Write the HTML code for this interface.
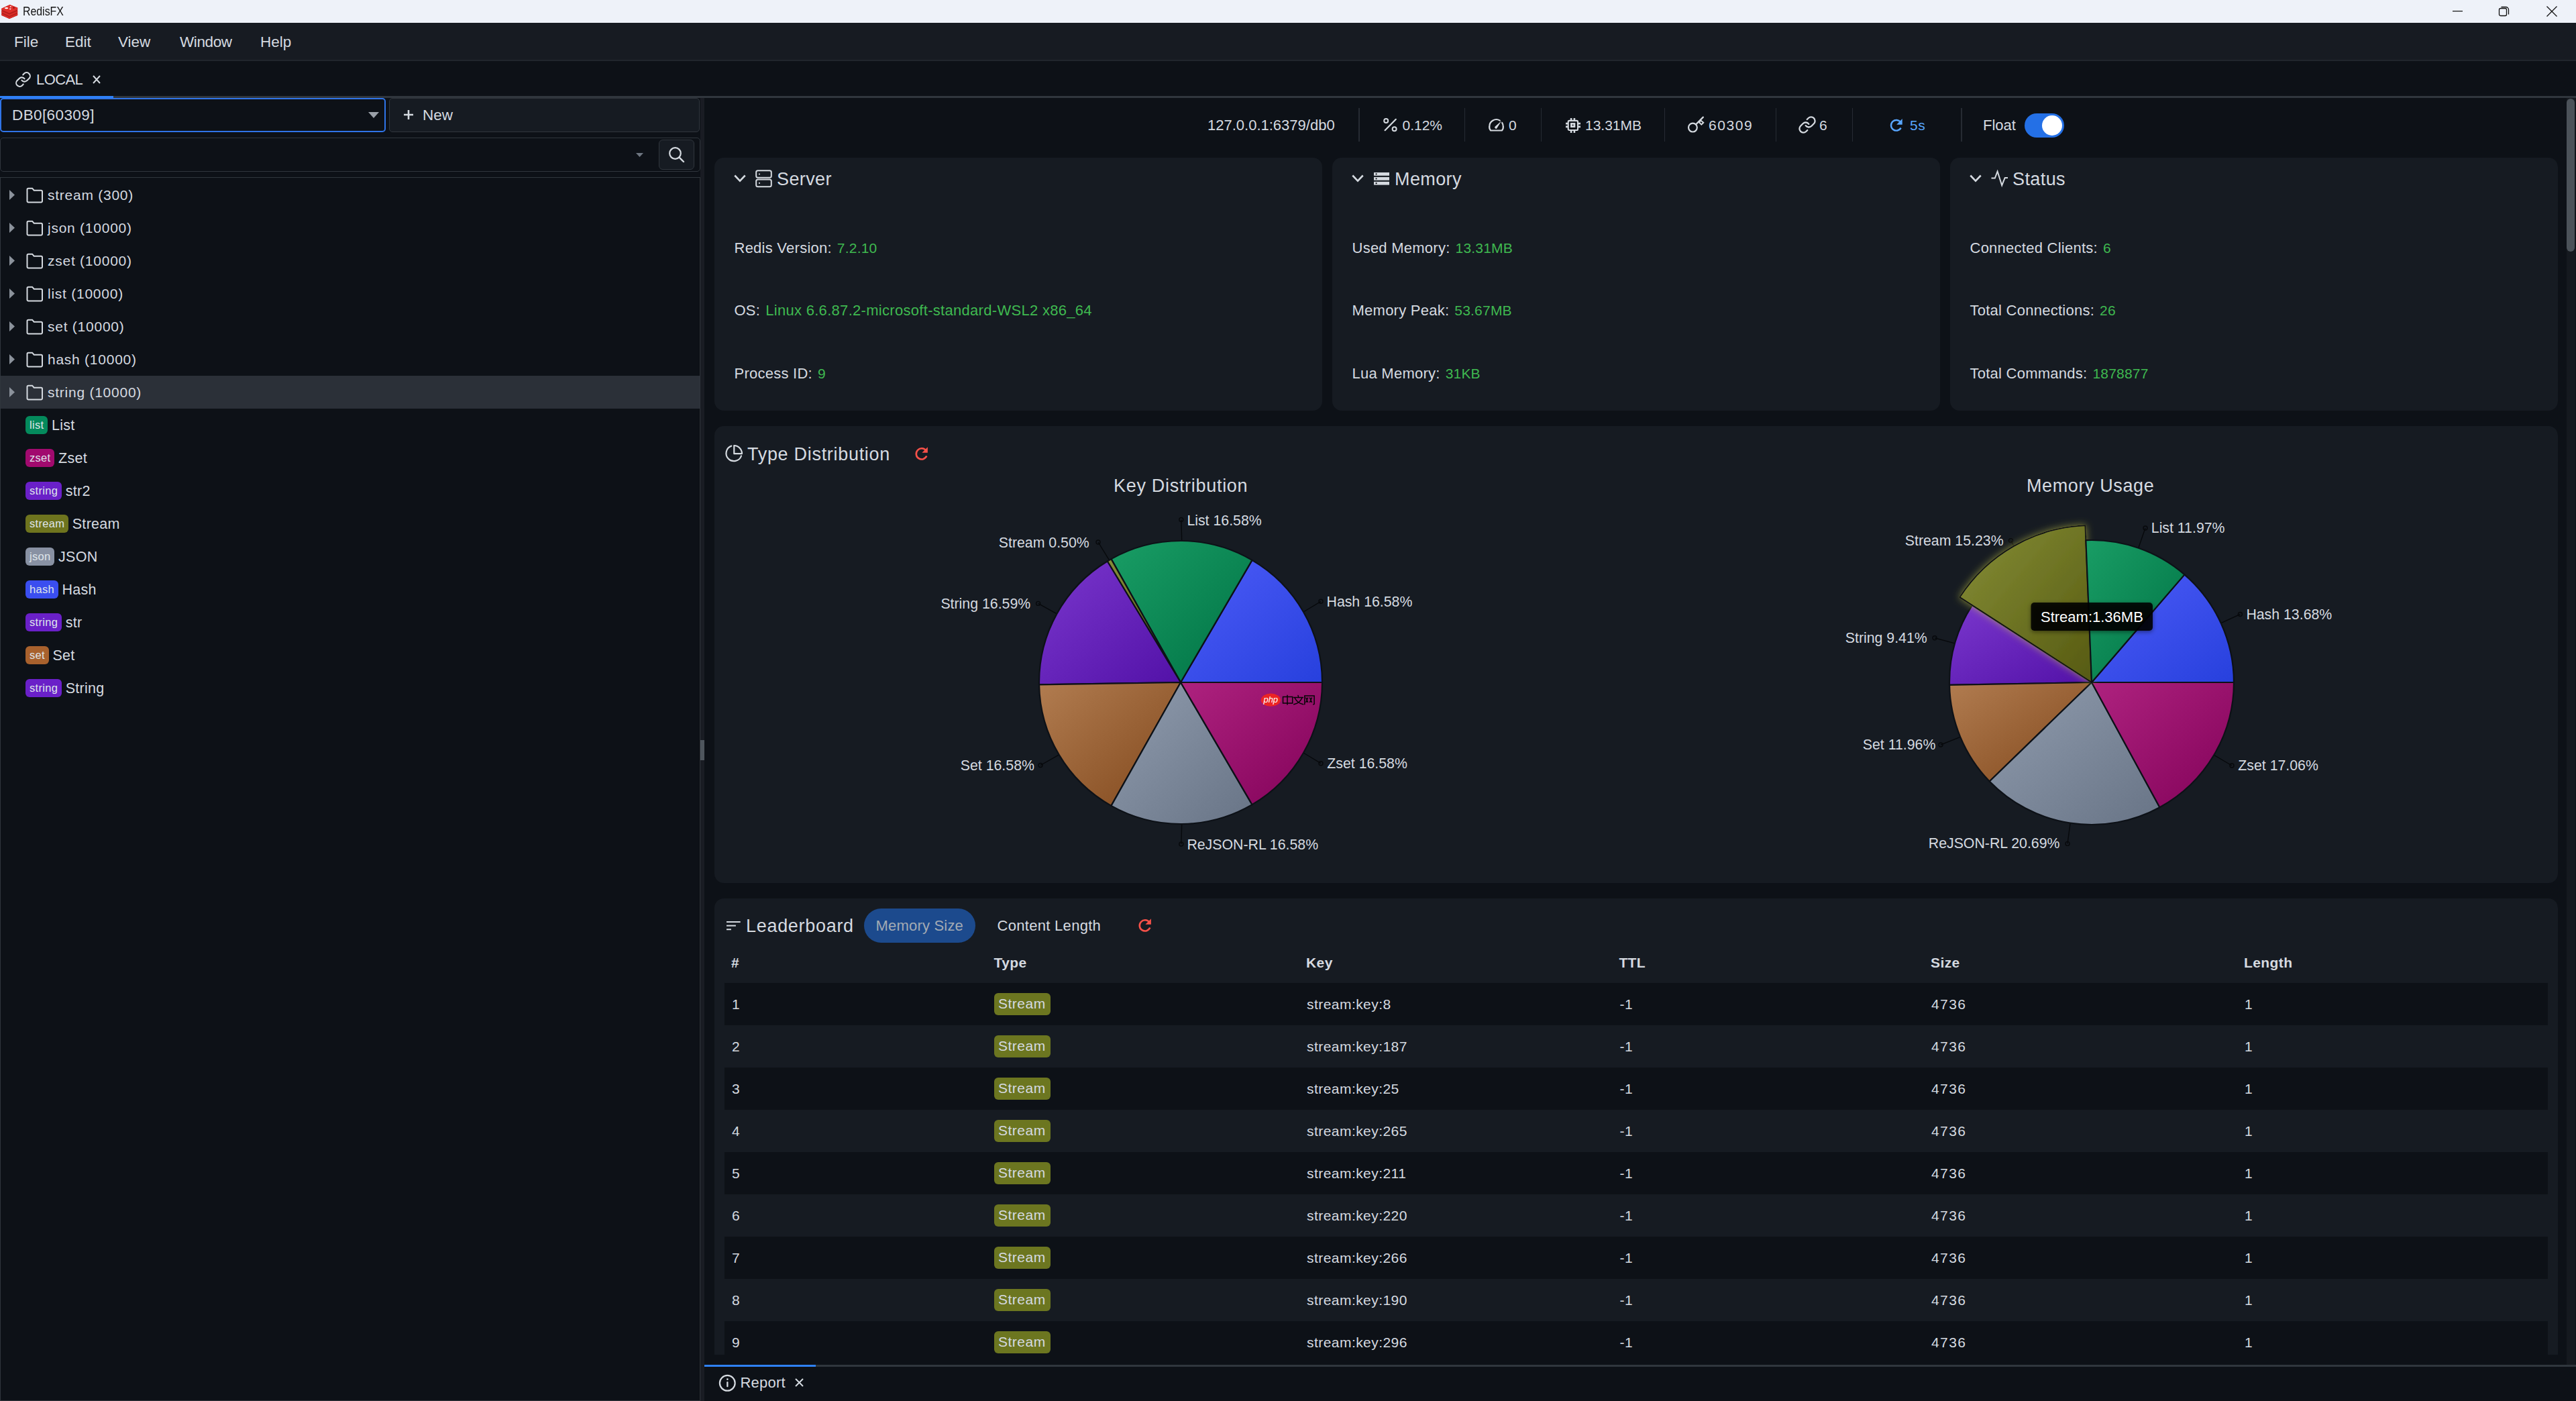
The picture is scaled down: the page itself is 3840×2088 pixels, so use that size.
<!DOCTYPE html>
<html><head><meta charset="utf-8">
<style>
*{box-sizing:border-box;margin:0;padding:0}
html,body{width:3840px;height:2088px;overflow:hidden;background:#0d1117;font-family:"Liberation Sans",sans-serif;color:#d5dae0}
.a{position:absolute}
.t{position:absolute;white-space:nowrap;line-height:30px;height:30px}
.g{color:#3fb950}
svg{position:absolute;overflow:visible}
</style></head><body>
<!-- title bar -->
<div class="a" style="left:0;top:0;width:3840px;height:34px;background:#eef2f9"></div>
<svg style="left:2px;top:7px" width="25" height="21" viewBox="0 0 25 21">
 <path d="M0.3 5.8 L12.6 0.1 L24.2 4.4 L24.2 15.9 L12 20.9 L0.3 15.9Z" fill="#b51f1b"/>
 <path d="M0.3 5.8 L12.6 0.1 L24.2 4.4 L24.2 7.2 L12 12.6 L0.3 7.4Z" fill="#e0302a"/>
 <path d="M0.3 9.2 L12 14.6 L24.2 9.2 L24.2 11.6 L12 17 L0.3 11.6Z" fill="#d82d27"/>
 <path d="M0.3 13.2 L12 18.6 L24.2 13.2 L24.2 15.6 L12 20.9 L0.3 15.6Z" fill="#d82d27"/>
 <ellipse cx="7.6" cy="5.1" rx="2.6" ry="1.2" fill="#fff"/>
 <path d="M12.6 2 L15.4 2.8 L13.3 4.1Z" fill="#fff"/>
 <path d="M11.5 5.9 L14.8 5.4 L13.5 7.6Z" fill="#fff"/>
 <circle cx="18.6" cy="4.7" r="1.1" fill="#7a1010"/>
</svg>
<div class="t" style="left:34px;top:2.4px;font-size:19px;color:#111;transform:scaleX(0.835);transform-origin:0 0">RedisFX</div>
<svg style="left:3656px;top:16px" width="15" height="1"><rect x="0" y="0" width="15" height="1.2" fill="#111"/></svg>
<svg style="left:3724px;top:8px" width="18" height="18" viewBox="0 0 18 18"><rect x="1.5" y="4.5" width="11" height="11" rx="2" fill="none" stroke="#111" stroke-width="1.3"/><path d="M4.5 2.5 h7 a4 4 0 0 1 4 4 v7" fill="none" stroke="#111" stroke-width="1.3"/></svg>
<svg style="left:3796px;top:8.5px" width="16" height="16" viewBox="0 0 16 16"><path d="M0.5 0.5 L15.5 15.5 M15.5 0.5 L0.5 15.5" stroke="#111" stroke-width="1.3"/></svg>

<!-- menu bar -->
<div class="a" style="left:0;top:34px;width:3840px;height:57px;background:#171b22;border-bottom:2px solid #21262d"></div>
<div class="t" style="left:21px;top:48.4px;font-size:22.5px">File</div>
<div class="t" style="left:97px;top:48.4px;font-size:22.5px">Edit</div>
<div class="t" style="left:176px;top:48.4px;font-size:22.5px">View</div>
<div class="t" style="left:268px;top:48.4px;font-size:22.5px;letter-spacing:-0.4px">Window</div>
<div class="t" style="left:388px;top:48.4px;font-size:22.5px">Help</div>

<!-- tab bar -->
<div class="a" style="left:0;top:91px;width:3840px;height:52px;background:#0d1117"></div>
<div class="a" style="left:0;top:143px;width:3840px;height:3px;background:#30363d"></div>
<div class="a" style="left:0;top:143px;width:169px;height:3px;background:#2f81f7"></div>
<svg style="left:22px;top:106px" width="25" height="25" viewBox="0 0 24 24" fill="none" stroke="#d5dae0" stroke-width="2" stroke-linecap="round"><path d="M10 13a5 5 0 0 0 7.54.54l3-3a5 5 0 0 0-7.07-7.07l-1.72 1.71"/><path d="M14 11a5 5 0 0 0-7.54-.54l-3 3a5 5 0 0 0 7.07 7.07l1.71-1.71"/></svg>
<div class="t" style="left:54px;top:104px;font-size:22px;letter-spacing:-0.6px">LOCAL</div>
<svg style="left:138px;top:112px" width="12" height="13" viewBox="0 0 12 13"><path d="M1 1 L11 12 M11 1 L1 12" stroke="#d5dae0" stroke-width="2"/></svg>


<!-- LEFT PANEL -->
<div class="a" style="left:0;top:146px;width:1044px;height:1942px;background:#0d1117"></div>
<div class="a" style="left:1044px;top:146px;width:6px;height:1942px;background:#191c23"></div>
<div class="a" style="left:1044px;top:1103px;width:6px;height:30px;background:#4f565e"></div>
<!-- db select -->
<div class="a" style="left:0;top:146px;width:575px;height:51px;border:2px solid #2f74e8;border-radius:5px;background:#0d1117"></div>
<div class="t" style="left:18px;top:157px;font-size:22.5px;letter-spacing:0.4px">DB0[60309]</div>
<svg style="left:549px;top:167px" width="16" height="9" viewBox="0 0 16 9"><path d="M0 0 L16 0 L8 9Z" fill="#9aa0a8"/></svg>
<!-- new btn -->
<div class="a" style="left:580px;top:146px;width:463px;height:51px;border:1px solid #30363d;border-radius:5px;background:#161b22"></div>
<svg style="left:602px;top:164px" width="14" height="14" viewBox="0 0 14 14"><path d="M7 0 V14 M0 7 H14" stroke="#d5dae0" stroke-width="2.6"/></svg>
<div class="t" style="left:630px;top:156.8px;font-size:22.5px">New</div>
<!-- search -->
<div class="a" style="left:0;top:205px;width:1044px;height:51px;border:1px solid #30363d;border-radius:5px;background:#0d1117"></div>
<svg style="left:948px;top:228px" width="11" height="6" viewBox="0 0 11 6"><path d="M0 0 L11 0 L5.5 6Z" fill="#6e7681"/></svg>
<div class="a" style="left:982px;top:208px;width:53px;height:45px;border:1px solid #30363d;border-radius:6px;background:#161b22"></div>
<svg style="left:997px;top:219px" width="24" height="23" viewBox="0 0 24 23"><circle cx="9.5" cy="9.5" r="8.3" fill="none" stroke="#d5dae0" stroke-width="2.2"/><path d="M15.6 15.6 L22 22" stroke="#d5dae0" stroke-width="2.4" stroke-linecap="round"/></svg>
<!-- tree box -->
<div class="a" style="left:0;top:264px;width:1044px;height:1824px;border:1px solid #30363d;border-radius:0;background:#0d1117"></div>
<div class="a" style="left:1042px;top:265px;width:1px;height:1822px;background:#0a0c10"></div>
<svg style="left:14px;top:283.1px" width="8" height="15" viewBox="0 0 8 15"><path d="M0 0 L8 7.5 L0 15Z" fill="#8b929b"/></svg>
<svg style="left:38px;top:278.6px" width="27" height="24" viewBox="0 0 27 24"><path d="M2.5 3.5 a1.8 1.8 0 0 1 1.8-1.8 h5.8 l2.6 3 h10.5 a1.8 1.8 0 0 1 1.8 1.8 v14.2 a1.8 1.8 0 0 1 -1.8 1.8 h-18.9 a1.8 1.8 0 0 1 -1.8-1.8z" fill="none" stroke="#d5dae0" stroke-width="2"/></svg>
<div class="t" style="left:71px;top:275.6px;font-size:21px;letter-spacing:0.75px">stream (300)</div>
<svg style="left:14px;top:332.2px" width="8" height="15" viewBox="0 0 8 15"><path d="M0 0 L8 7.5 L0 15Z" fill="#8b929b"/></svg>
<svg style="left:38px;top:327.7px" width="27" height="24" viewBox="0 0 27 24"><path d="M2.5 3.5 a1.8 1.8 0 0 1 1.8-1.8 h5.8 l2.6 3 h10.5 a1.8 1.8 0 0 1 1.8 1.8 v14.2 a1.8 1.8 0 0 1 -1.8 1.8 h-18.9 a1.8 1.8 0 0 1 -1.8-1.8z" fill="none" stroke="#d5dae0" stroke-width="2"/></svg>
<div class="t" style="left:71px;top:324.7px;font-size:21px;letter-spacing:0.75px">json (10000)</div>
<svg style="left:14px;top:381.2px" width="8" height="15" viewBox="0 0 8 15"><path d="M0 0 L8 7.5 L0 15Z" fill="#8b929b"/></svg>
<svg style="left:38px;top:376.7px" width="27" height="24" viewBox="0 0 27 24"><path d="M2.5 3.5 a1.8 1.8 0 0 1 1.8-1.8 h5.8 l2.6 3 h10.5 a1.8 1.8 0 0 1 1.8 1.8 v14.2 a1.8 1.8 0 0 1 -1.8 1.8 h-18.9 a1.8 1.8 0 0 1 -1.8-1.8z" fill="none" stroke="#d5dae0" stroke-width="2"/></svg>
<div class="t" style="left:71px;top:373.7px;font-size:21px;letter-spacing:0.75px">zset (10000)</div>
<svg style="left:14px;top:430.2px" width="8" height="15" viewBox="0 0 8 15"><path d="M0 0 L8 7.5 L0 15Z" fill="#8b929b"/></svg>
<svg style="left:38px;top:425.8px" width="27" height="24" viewBox="0 0 27 24"><path d="M2.5 3.5 a1.8 1.8 0 0 1 1.8-1.8 h5.8 l2.6 3 h10.5 a1.8 1.8 0 0 1 1.8 1.8 v14.2 a1.8 1.8 0 0 1 -1.8 1.8 h-18.9 a1.8 1.8 0 0 1 -1.8-1.8z" fill="none" stroke="#d5dae0" stroke-width="2"/></svg>
<div class="t" style="left:71px;top:422.8px;font-size:21px;letter-spacing:0.75px">list (10000)</div>
<svg style="left:14px;top:479.3px" width="8" height="15" viewBox="0 0 8 15"><path d="M0 0 L8 7.5 L0 15Z" fill="#8b929b"/></svg>
<svg style="left:38px;top:474.8px" width="27" height="24" viewBox="0 0 27 24"><path d="M2.5 3.5 a1.8 1.8 0 0 1 1.8-1.8 h5.8 l2.6 3 h10.5 a1.8 1.8 0 0 1 1.8 1.8 v14.2 a1.8 1.8 0 0 1 -1.8 1.8 h-18.9 a1.8 1.8 0 0 1 -1.8-1.8z" fill="none" stroke="#d5dae0" stroke-width="2"/></svg>
<div class="t" style="left:71px;top:471.8px;font-size:21px;letter-spacing:0.75px">set (10000)</div>
<svg style="left:14px;top:528.4px" width="8" height="15" viewBox="0 0 8 15"><path d="M0 0 L8 7.5 L0 15Z" fill="#8b929b"/></svg>
<svg style="left:38px;top:523.9px" width="27" height="24" viewBox="0 0 27 24"><path d="M2.5 3.5 a1.8 1.8 0 0 1 1.8-1.8 h5.8 l2.6 3 h10.5 a1.8 1.8 0 0 1 1.8 1.8 v14.2 a1.8 1.8 0 0 1 -1.8 1.8 h-18.9 a1.8 1.8 0 0 1 -1.8-1.8z" fill="none" stroke="#d5dae0" stroke-width="2"/></svg>
<div class="t" style="left:71px;top:520.9px;font-size:21px;letter-spacing:0.75px">hash (10000)</div>
<div class="a" style="left:1px;top:560.0px;width:1042px;height:49.05px;background:#2b3038"></div>
<svg style="left:14px;top:577.4px" width="8" height="15" viewBox="0 0 8 15"><path d="M0 0 L8 7.5 L0 15Z" fill="#8b929b"/></svg>
<svg style="left:38px;top:572.9px" width="27" height="24" viewBox="0 0 27 24"><path d="M2.5 3.5 a1.8 1.8 0 0 1 1.8-1.8 h5.8 l2.6 3 h10.5 a1.8 1.8 0 0 1 1.8 1.8 v14.2 a1.8 1.8 0 0 1 -1.8 1.8 h-18.9 a1.8 1.8 0 0 1 -1.8-1.8z" fill="none" stroke="#d5dae0" stroke-width="2"/></svg>
<div class="t" style="left:71px;top:569.9px;font-size:21px;letter-spacing:0.75px">string (10000)</div>
<div class="a" style="left:38px;top:619.6px;height:27px;padding:0 6px;border-radius:6px;background:#048a5c;font-size:16.5px;line-height:27px;color:#dfe5ea;letter-spacing:0.3px;display:flex;align-items:center"><span>list</span><span style="position:absolute;left:calc(100% + 5.5px);top:1px;font-size:21.5px;letter-spacing:0.3px;color:#d5dae0;white-space:nowrap">List</span></div>
<div class="a" style="left:38px;top:668.7px;height:27px;padding:0 6px;border-radius:6px;background:#a10a6e;font-size:16.5px;line-height:27px;color:#dfe5ea;letter-spacing:0.3px;display:flex;align-items:center"><span>zset</span><span style="position:absolute;left:calc(100% + 5.5px);top:1px;font-size:21.5px;letter-spacing:0.3px;color:#d5dae0;white-space:nowrap">Zset</span></div>
<div class="a" style="left:38px;top:717.8px;height:27px;padding:0 6px;border-radius:6px;background:#6a20c8;font-size:16.5px;line-height:27px;color:#dfe5ea;letter-spacing:0.3px;display:flex;align-items:center"><span>string</span><span style="position:absolute;left:calc(100% + 5.5px);top:1px;font-size:21.5px;letter-spacing:0.3px;color:#d5dae0;white-space:nowrap">str2</span></div>
<div class="a" style="left:38px;top:766.8px;height:27px;padding:0 6px;border-radius:6px;background:#6e741e;font-size:16.5px;line-height:27px;color:#dfe5ea;letter-spacing:0.3px;display:flex;align-items:center"><span>stream</span><span style="position:absolute;left:calc(100% + 5.5px);top:1px;font-size:21.5px;letter-spacing:0.3px;color:#d5dae0;white-space:nowrap">Stream</span></div>
<div class="a" style="left:38px;top:815.9px;height:27px;padding:0 6px;border-radius:6px;background:#8891a3;font-size:16.5px;line-height:27px;color:#dfe5ea;letter-spacing:0.3px;display:flex;align-items:center"><span>json</span><span style="position:absolute;left:calc(100% + 5.5px);top:1px;font-size:21.5px;letter-spacing:0.3px;color:#d5dae0;white-space:nowrap">JSON</span></div>
<div class="a" style="left:38px;top:864.9px;height:27px;padding:0 6px;border-radius:6px;background:#3a4ef0;font-size:16.5px;line-height:27px;color:#dfe5ea;letter-spacing:0.3px;display:flex;align-items:center"><span>hash</span><span style="position:absolute;left:calc(100% + 5.5px);top:1px;font-size:21.5px;letter-spacing:0.3px;color:#d5dae0;white-space:nowrap">Hash</span></div>
<div class="a" style="left:38px;top:914.0px;height:27px;padding:0 6px;border-radius:6px;background:#6a20c8;font-size:16.5px;line-height:27px;color:#dfe5ea;letter-spacing:0.3px;display:flex;align-items:center"><span>string</span><span style="position:absolute;left:calc(100% + 5.5px);top:1px;font-size:21.5px;letter-spacing:0.3px;color:#d5dae0;white-space:nowrap">str</span></div>
<div class="a" style="left:38px;top:963.0px;height:27px;padding:0 6px;border-radius:6px;background:#a8612d;font-size:16.5px;line-height:27px;color:#dfe5ea;letter-spacing:0.3px;display:flex;align-items:center"><span>set</span><span style="position:absolute;left:calc(100% + 5.5px);top:1px;font-size:21.5px;letter-spacing:0.3px;color:#d5dae0;white-space:nowrap">Set</span></div>
<div class="a" style="left:38px;top:1012.0px;height:27px;padding:0 6px;border-radius:6px;background:#6a20c8;font-size:16.5px;line-height:27px;color:#dfe5ea;letter-spacing:0.3px;display:flex;align-items:center"><span>string</span><span style="position:absolute;left:calc(100% + 5.5px);top:1px;font-size:21.5px;letter-spacing:0.3px;color:#d5dae0;white-space:nowrap">String</span></div>
<div id="left"></div>

<!-- RIGHT PANEL -->
<div class="a" style="left:1050px;top:146px;width:2790px;height:1888px;background:#0d1117"></div>
<div class="a" style="left:3826px;top:146px;width:13px;height:1888px;background:#15191f"></div>
<div class="a" style="left:3826px;top:147px;width:12px;height:228px;border-radius:6px;background:#4b5259"></div>
<!-- stats bar -->
<div class="t" style="left:1800px;top:171.5px;font-size:22px;letter-spacing:0px;">127.0.0.1:6379/db0</div>
<div class="a" style="left:2025.0px;top:161px;width:1.5px;height:50px;background:#262b33"></div>
<div class="a" style="left:2182.8px;top:161px;width:1.5px;height:50px;background:#262b33"></div>
<div class="a" style="left:2296.5px;top:161px;width:1.5px;height:50px;background:#262b33"></div>
<div class="a" style="left:2480.5px;top:161px;width:1.5px;height:50px;background:#262b33"></div>
<div class="a" style="left:2646.5px;top:161px;width:1.5px;height:50px;background:#262b33"></div>
<div class="a" style="left:2760.8px;top:161px;width:1.5px;height:50px;background:#262b33"></div>
<div class="a" style="left:2923.2px;top:161px;width:1.5px;height:50px;background:#262b33"></div>
<svg style="left:2062px;top:176px" width="21" height="20" viewBox="0 0 21 20"><circle cx="4.2" cy="3.9" r="3" fill="none" stroke="#d5dae0" stroke-width="2"/><circle cx="16.6" cy="16.3" r="3" fill="none" stroke="#d5dae0" stroke-width="2"/><path d="M2.6 18.2 L18.8 1.8" stroke="#d5dae0" stroke-width="2.2" stroke-linecap="round"/></svg>
<div class="t" style="left:2090.5px;top:171.5px;font-size:21px;letter-spacing:0px;">0.12%</div>
<svg style="left:2219px;top:177px" width="23" height="19" viewBox="0 0 23 19"><path d="M16.8 2.6 A10.2 10.2 0 0 0 1.3 11.3 a7 7 0 0 0 1.8 6.2 h16.8 a7 7 0 0 0 1.8-6.2 a10 10 0 0 0 -1.5-5.3" fill="none" stroke="#d5dae0" stroke-width="2.2" stroke-linecap="round"/><path d="M19.2 3.2 L12.8 13.6 A1.9 1.9 0 1 1 9.8 11.4Z" fill="#d5dae0"/></svg>
<div class="t" style="left:2249px;top:171.5px;font-size:21px;letter-spacing:0px;">0</div>
<svg style="left:2334px;top:176px" width="22" height="22" viewBox="0 0 22 22"><rect x="3.7" y="3.9" width="14.3" height="14.1" rx="1.5" fill="none" stroke="#d5dae0" stroke-width="2.1"/><rect x="7" y="7.1" width="7.3" height="6.9" fill="#d5dae0"/><circle cx="10.6" cy="10.5" r="1" fill="#0d1117"/><path d="M8.1 0 v3 M12.9 0 v3 M8.1 19 v3 M12.9 19 v3 M0 8.1 h3 M0 12.9 h3 M19 8.1 h3 M19 12.9 h3" stroke="#d5dae0" stroke-width="2.6"/></svg>
<div class="t" style="left:2363px;top:171.5px;font-size:21px;letter-spacing:0px;">13.31MB</div>
<svg style="left:2515px;top:173px" width="28" height="26" viewBox="0 0 28 26"><circle cx="8.4" cy="17.1" r="6.4" fill="none" stroke="#d5dae0" stroke-width="2.2"/><path d="M13 12.5 L23.8 1.6" stroke="#d5dae0" stroke-width="2.3" stroke-linecap="round"/><path d="M17.8 9.2 L20.4 6.6 L24.2 9.8 L21.3 12.6Z" fill="none" stroke="#d5dae0" stroke-width="2"/></svg>
<div class="t" style="left:2547px;top:171.5px;font-size:21px;letter-spacing:1.6px;">60309</div>
<svg style="left:2680px;top:172px" width="28" height="28" viewBox="0 0 24 24" fill="none" stroke="#d5dae0" stroke-width="1.95" stroke-linecap="round"><path d="M10 13a5 5 0 0 0 7.54.54l3-3a5 5 0 0 0-7.07-7.07l-1.72 1.71"/><path d="M14 11a5 5 0 0 0-7.54-.54l-3 3a5 5 0 0 0 7.07 7.07l1.71-1.71"/></svg>
<div class="t" style="left:2712px;top:171.5px;font-size:21px;letter-spacing:0px;">6</div>
<svg style="left:2816px;top:176px" width="22" height="21" viewBox="0 0 22 21"><path d="M17.2 6.4 A7.8 7.8 0 1 0 17.6 14.6" fill="none" stroke="#58a6ff" stroke-width="2.4"/><path d="M19.7 0.9 V9.8 H11.2Z" fill="#58a6ff"/></svg>
<div class="t" style="left:2847px;top:171.5px;font-size:21px;color:#58a6ff;letter-spacing:0.6px;">5s</div>
<div class="t" style="left:2956px;top:171.5px;font-size:22px;letter-spacing:0px;">Float</div>
<div class="a" style="left:3018px;top:169px;width:59px;height:36px;border-radius:18px;background:#2470e6"></div><div class="a" style="left:3044px;top:172px;width:30px;height:30px;border-radius:15px;background:#fff"></div>
<div class="a" style="left:1065px;top:235px;width:906px;height:377px;border-radius:14px;background:#161b22"></div>
<svg style="left:1093.7px;top:260px" width="18" height="12" viewBox="0 0 18 12"><path d="M1.3 1.5 L9 9.6 L16.7 1.5" fill="none" stroke="#d5dae0" stroke-width="2.6"/></svg>
<svg style="left:1126px;top:253px" width="25" height="26" viewBox="0 0 25 26"><rect x="1.2" y="1.2" width="22.6" height="10.6" rx="2.5" fill="none" stroke="#d5dae0" stroke-width="2"/><rect x="1.2" y="14.6" width="22.6" height="10.6" rx="2.5" fill="none" stroke="#d5dae0" stroke-width="2"/><circle cx="6" cy="6.5" r="1.1" fill="#d5dae0"/><circle cx="6" cy="19.9" r="1.1" fill="#d5dae0"/></svg>
<div class="t" style="left:1158px;top:252.4px;font-size:27px;letter-spacing:0.4px;">Server</div>
<div class="t" style="left:1094.5px;top:355.3px;font-size:22px;letter-spacing:0.25px">Redis Version:<span class="g" style="margin-left:8px;font-size:21px;letter-spacing:0.2px">7.2.10</span></div>
<div class="t" style="left:1094.5px;top:448.4px;font-size:22px;letter-spacing:0.25px">OS:<span class="g" style="margin-left:8px;font-size:22px;letter-spacing:0.3px">Linux 6.6.87.2-microsoft-standard-WSL2 x86_64</span></div>
<div class="t" style="left:1094.5px;top:541.5px;font-size:22px;letter-spacing:0.25px">Process ID:<span class="g" style="margin-left:8px;font-size:21px;letter-spacing:0.2px">9</span></div>
<div class="a" style="left:1986px;top:235px;width:906px;height:377px;border-radius:14px;background:#161b22"></div>
<svg style="left:2014.7px;top:260px" width="18" height="12" viewBox="0 0 18 12"><path d="M1.3 1.5 L9 9.6 L16.7 1.5" fill="none" stroke="#d5dae0" stroke-width="2.6"/></svg>
<svg style="left:2048px;top:257px" width="23" height="19" viewBox="0 0 23 19"><rect x="0" y="0" width="23" height="4.8" fill="#d5dae0"/><rect x="0" y="6.9" width="23" height="4.8" fill="#d5dae0"/><rect x="0" y="13.8" width="23" height="4.8" fill="#d5dae0"/><circle cx="3.6" cy="2.4" r="1.1" fill="#0d1117"/><circle cx="3.6" cy="9.3" r="1.1" fill="#0d1117"/><circle cx="3.6" cy="16.2" r="1.1" fill="#0d1117"/></svg>
<div class="t" style="left:2079px;top:252.4px;font-size:27px;letter-spacing:0.4px;">Memory</div>
<div class="t" style="left:2015.5px;top:355.3px;font-size:22px;letter-spacing:0.25px">Used Memory:<span class="g" style="margin-left:8px;font-size:21px;letter-spacing:0.2px">13.31MB</span></div>
<div class="t" style="left:2015.5px;top:448.4px;font-size:22px;letter-spacing:0.25px">Memory Peak:<span class="g" style="margin-left:8px;font-size:21px;letter-spacing:0.2px">53.67MB</span></div>
<div class="t" style="left:2015.5px;top:541.5px;font-size:22px;letter-spacing:0.25px">Lua Memory:<span class="g" style="margin-left:8px;font-size:21px;letter-spacing:0.2px">31KB</span></div>
<div class="a" style="left:2907px;top:235px;width:906px;height:377px;border-radius:14px;background:#161b22"></div>
<svg style="left:2935.7px;top:260px" width="18" height="12" viewBox="0 0 18 12"><path d="M1.3 1.5 L9 9.6 L16.7 1.5" fill="none" stroke="#d5dae0" stroke-width="2.6"/></svg>
<svg style="left:2968px;top:254px" width="26" height="24" viewBox="0 0 26 24"><path d="M0.5 11.6 H5.8 L9.6 1.5 L16.2 22.2 L20.7 11 H25" fill="none" stroke="#d5dae0" stroke-width="2" stroke-linejoin="miter"/></svg>
<div class="t" style="left:3000px;top:252.4px;font-size:27px;letter-spacing:0.4px;">Status</div>
<div class="t" style="left:2936.5px;top:355.3px;font-size:22px;letter-spacing:0.25px">Connected Clients:<span class="g" style="margin-left:8px;font-size:21px;letter-spacing:0.2px">6</span></div>
<div class="t" style="left:2936.5px;top:448.4px;font-size:22px;letter-spacing:0.25px">Total Connections:<span class="g" style="margin-left:8px;font-size:21px;letter-spacing:0.2px">26</span></div>
<div class="t" style="left:2936.5px;top:541.5px;font-size:22px;letter-spacing:0.25px">Total Commands:<span class="g" style="margin-left:8px;font-size:21px;letter-spacing:0.2px">1878877</span></div>
<div class="a" style="left:1065px;top:635px;width:2748px;height:681px;border-radius:14px;background:#161b22"></div>
<svg style="left:1080px;top:662px" width="28" height="28" viewBox="0 0 28 28"><path d="M10.3 2.6 A11.6 11.6 0 1 0 25 17.5" fill="none" stroke="#d5dae0" stroke-width="2.2" stroke-linecap="round"/><path d="M14.3 2 V14.2 H26 A12 12 0 0 0 14.3 2Z" fill="none" stroke="#d5dae0" stroke-width="2.2" stroke-linejoin="round"/></svg>
<div class="t" style="left:1114px;top:662px;font-size:27px;letter-spacing:0.7px;">Type Distribution</div>
<svg style="left:1363px;top:665px" width="22" height="22" viewBox="0 0 22 22"><path d="M17.4 6.6 A8.1 8.1 0 1 0 18.3 14.6" fill="none" stroke="#f85149" stroke-width="2.6"/><path d="M19.9 1.2 V9.8 H11.4Z" fill="#f85149"/></svg>
<div class="t" style="left:1660px;top:708.8px;font-size:27px;letter-spacing:0.7px;">Key Distribution</div>
<div class="t" style="left:3021px;top:708.5px;font-size:27px;letter-spacing:0.6px;">Memory Usage</div>
<svg style="left:0;top:0" width="3840" height="2088" viewBox="0 0 3840 2088">
<defs><linearGradient id="kHash" x1="0" y1="0" x2="1" y2="1"><stop offset="0" stop-color="#4d5cf8"/><stop offset="1" stop-color="#2740dd"/></linearGradient><linearGradient id="kList" x1="0" y1="0" x2="1" y2="1"><stop offset="0" stop-color="#199d65"/><stop offset="1" stop-color="#007244"/></linearGradient><linearGradient id="kStream" x1="0" y1="0" x2="1" y2="1"><stop offset="0" stop-color="#868e37"/><stop offset="1" stop-color="#565a11"/></linearGradient><linearGradient id="kString" x1="0" y1="0" x2="1" y2="1"><stop offset="0" stop-color="#7a37cd"/><stop offset="1" stop-color="#5211a7"/></linearGradient><linearGradient id="kSet" x1="0" y1="0" x2="1" y2="1"><stop offset="0" stop-color="#b17c50"/><stop offset="1" stop-color="#81481c"/></linearGradient><linearGradient id="kReJSONRL" x1="0" y1="0" x2="1" y2="1"><stop offset="0" stop-color="#909cae"/><stop offset="1" stop-color="#687486"/></linearGradient><linearGradient id="kZset" x1="0" y1="0" x2="1" y2="1"><stop offset="0" stop-color="#ae227f"/><stop offset="1" stop-color="#820259"/></linearGradient><linearGradient id="mHash" x1="0" y1="0" x2="1" y2="1"><stop offset="0" stop-color="#4d5cf8"/><stop offset="1" stop-color="#2740dd"/></linearGradient><linearGradient id="mList" x1="0" y1="0" x2="1" y2="1"><stop offset="0" stop-color="#199d65"/><stop offset="1" stop-color="#007244"/></linearGradient><linearGradient id="mStream" x1="0" y1="0" x2="1" y2="1"><stop offset="0" stop-color="#868e37"/><stop offset="1" stop-color="#565a11"/></linearGradient><linearGradient id="mString" x1="0" y1="0" x2="1" y2="1"><stop offset="0" stop-color="#7a37cd"/><stop offset="1" stop-color="#5211a7"/></linearGradient><linearGradient id="mSet" x1="0" y1="0" x2="1" y2="1"><stop offset="0" stop-color="#b17c50"/><stop offset="1" stop-color="#81481c"/></linearGradient><linearGradient id="mReJSONRL" x1="0" y1="0" x2="1" y2="1"><stop offset="0" stop-color="#909cae"/><stop offset="1" stop-color="#687486"/></linearGradient><linearGradient id="mZset" x1="0" y1="0" x2="1" y2="1"><stop offset="0" stop-color="#ae227f"/><stop offset="1" stop-color="#820259"/></linearGradient><filter id="glow" x="-30%" y="-30%" width="160%" height="160%"><feDropShadow dx="0" dy="0" stdDeviation="6" flood-color="#d8d84a" flood-opacity="0.55"/></filter>
<filter id="tsh" x="-20%" y="-30%" width="140%" height="160%"><feDropShadow dx="0" dy="2" stdDeviation="3" flood-color="#000" flood-opacity="0.5"/></filter></defs>
<path d="M1943.0 912.0 L1969.0 896.3" stroke="#07090c" stroke-width="1.4"/><circle cx="1969" cy="896.3" r="3" fill="none" stroke="#07090c" stroke-width="1.4"/><path d="M1761.7 806.0 L1760.8 774.5" stroke="#07090c" stroke-width="1.4"/><circle cx="1760.8" cy="774.5" r="3" fill="none" stroke="#07090c" stroke-width="1.4"/><path d="M1653.6 834.8 L1637.0 808.0" stroke="#07090c" stroke-width="1.4"/><circle cx="1637" cy="808" r="3" fill="none" stroke="#07090c" stroke-width="1.4"/><path d="M1575.4 914.9 L1547.6 899.4" stroke="#07090c" stroke-width="1.4"/><circle cx="1547.6" cy="899.4" r="3" fill="none" stroke="#07090c" stroke-width="1.4"/><path d="M1578.7 1124.9 L1551.0 1140.5" stroke="#07090c" stroke-width="1.4"/><circle cx="1551" cy="1140.5" r="3" fill="none" stroke="#07090c" stroke-width="1.4"/><path d="M1761.7 1228.0 L1760.8 1258.0" stroke="#07090c" stroke-width="1.4"/><circle cx="1760.8" cy="1258" r="3" fill="none" stroke="#07090c" stroke-width="1.4"/><path d="M1943.0 1122.0 L1969.0 1137.7" stroke="#07090c" stroke-width="1.4"/><circle cx="1969" cy="1137.7" r="3" fill="none" stroke="#07090c" stroke-width="1.4"/><path d="M3310.7 928.7 L3339.4 915.5" stroke="#07090c" stroke-width="1.4"/><circle cx="3339.4" cy="915.5" r="3" fill="none" stroke="#07090c" stroke-width="1.4"/><path d="M3187.7 816.8 L3198.0 787.0" stroke="#07090c" stroke-width="1.4"/><circle cx="3198" cy="787" r="3" fill="none" stroke="#07090c" stroke-width="1.4"/><path d="M3012.8 832.9 L2997.5 805.6" stroke="#07090c" stroke-width="1.4"/><circle cx="2997.5" cy="805.6" r="3" fill="none" stroke="#07090c" stroke-width="1.4"/><path d="M2914.1 958.9 L2884.0 950.8" stroke="#07090c" stroke-width="1.4"/><circle cx="2884" cy="950.8" r="3" fill="none" stroke="#07090c" stroke-width="1.4"/><path d="M2922.2 1098.4 L2893.0 1110.0" stroke="#07090c" stroke-width="1.4"/><circle cx="2893" cy="1110" r="3" fill="none" stroke="#07090c" stroke-width="1.4"/><path d="M3086.1 1226.6 L3082.0 1257.4" stroke="#07090c" stroke-width="1.4"/><circle cx="3082" cy="1257.4" r="3" fill="none" stroke="#07090c" stroke-width="1.4"/><path d="M3300.3 1125.3 L3327.0 1141.0" stroke="#07090c" stroke-width="1.4"/><circle cx="3327" cy="1141" r="3" fill="none" stroke="#07090c" stroke-width="1.4"/><path d="M1760.00 1017.00 L1971.00 1017.00 A211 211 0 0 0 1866.47 834.83 Z" fill="url(#kHash)" stroke="#0d1117" stroke-width="2.2" stroke-linejoin="round"/><path d="M1760.00 1017.00 L1866.47 834.83 A211 211 0 0 0 1656.46 833.15 Z" fill="url(#kList)" stroke="#0d1117" stroke-width="2.2" stroke-linejoin="round"/><path d="M1760.00 1017.00 L1656.46 833.15 A211 211 0 0 0 1650.73 836.50 Z" fill="url(#kStream)" stroke="#0d1117" stroke-width="2.2" stroke-linejoin="round"/><path d="M1760.00 1017.00 L1650.73 836.50 A211 211 0 0 0 1549.03 1020.38 Z" fill="url(#kString)" stroke="#0d1117" stroke-width="2.2" stroke-linejoin="round"/><path d="M1760.00 1017.00 L1549.03 1020.38 A211 211 0 0 0 1656.46 1200.85 Z" fill="url(#kSet)" stroke="#0d1117" stroke-width="2.2" stroke-linejoin="round"/><path d="M1760.00 1017.00 L1656.46 1200.85 A211 211 0 0 0 1866.47 1199.17 Z" fill="url(#kReJSONRL)" stroke="#0d1117" stroke-width="2.2" stroke-linejoin="round"/><path d="M1760.00 1017.00 L1866.47 1199.17 A211 211 0 0 0 1971.00 1017.00 Z" fill="url(#kZset)" stroke="#0d1117" stroke-width="2.2" stroke-linejoin="round"/><path d="M3118.00 1017.00 L3330.00 1017.00 A212 212 0 0 0 3256.39 856.40 Z" fill="url(#mHash)" stroke="#0d1117" stroke-width="2.2" stroke-linejoin="round"/><path d="M3118.00 1017.00 L2939.86 902.06 A212 212 0 0 0 2906.04 1020.86 Z" fill="url(#mString)" stroke="#0d1117" stroke-width="2.2" stroke-linejoin="round"/><path d="M3118.00 1017.00 L2906.04 1020.86 A212 212 0 0 0 2965.76 1164.53 Z" fill="url(#mSet)" stroke="#0d1117" stroke-width="2.2" stroke-linejoin="round"/><path d="M3118.00 1017.00 L2965.76 1164.53 A212 212 0 0 0 3219.43 1203.16 Z" fill="url(#mReJSONRL)" stroke="#0d1117" stroke-width="2.2" stroke-linejoin="round"/><path d="M3118.00 1017.00 L3219.43 1203.16 A212 212 0 0 0 3330.00 1017.00 Z" fill="url(#mZset)" stroke="#0d1117" stroke-width="2.2" stroke-linejoin="round"/><path d="M3118.00 1017.00 L3108.45 783.20 A234 234 0 0 0 2921.38 890.13 Z" fill="url(#mStream)" stroke="#0d1117" stroke-width="1.8" stroke-linejoin="round" filter="url(#glow)"/><path d="M3118.00 1017.00 L3256.39 856.40 A212 212 0 0 0 3109.34 805.18 Z" fill="url(#mList)" stroke="#0d1117" stroke-width="2.2" stroke-linejoin="round"/>
<rect x="3027.5" y="898" width="181.5" height="42" rx="5" fill="#050607" fill-opacity="0.88" filter="url(#tsh)"/>
</svg>
<div class="t" style="left:1769.4px;top:761.0px;font-size:21.3px">List 16.58%</div>
<div class="t" style="left:1488.8px;top:793.7px;font-size:21.3px">Stream 0.50%</div>
<div class="t" style="left:1977.5px;top:882.0px;font-size:21.3px">Hash 16.58%</div>
<div class="t" style="left:1402.4px;top:884.8px;font-size:21.3px">String 16.59%</div>
<div class="t" style="left:1431.8px;top:1125.5px;font-size:21.3px">Set 16.58%</div>
<div class="t" style="left:1978.3px;top:1122.7px;font-size:21.3px">Zset 16.58%</div>
<div class="t" style="left:1769.4px;top:1244.0px;font-size:21.3px">ReJSON-RL 16.58%</div>
<div class="t" style="left:3206.8px;top:772.0px;font-size:21.3px">List 11.97%</div>
<div class="t" style="left:2839.8px;top:790.6px;font-size:21.3px">Stream 15.23%</div>
<div class="t" style="left:3348.4px;top:900.5px;font-size:21.3px">Hash 13.68%</div>
<div class="t" style="left:2750.8px;top:935.8px;font-size:21.3px">String 9.41%</div>
<div class="t" style="left:2776.8px;top:1095.0px;font-size:21.3px">Set 11.96%</div>
<div class="t" style="left:3336.3px;top:1126.0px;font-size:21.3px">Zset 17.06%</div>
<div class="t" style="left:2874.8px;top:1242.4px;font-size:21.3px">ReJSON-RL 20.69%</div>
<div class="t" style="left:3042px;top:904.8px;font-size:22px;color:#fff">Stream:1.36MB</div>
<svg style="left:1262px;top:0" width="1" height="1"></svg>
<svg style="left:1879px;top:1033px" width="82" height="21" viewBox="0 0 82 21"><ellipse cx="15.4" cy="10.2" rx="14.6" ry="9.6" fill="#ec2425"/><text x="4.6" y="14.2" font-family="Liberation Sans" font-size="13" font-style="italic" fill="#fff" textLength="21.5">php</text>
<g stroke="#050505" stroke-width="1.5" fill="none" stroke-linecap="round"><path d="M33.5 5.6 h14.2 v9.4 h-14.2z M40 3.3 v13.7"/><path d="M49.4 6.4 h14 M56 3.4 l0.5 2 M51.2 7.2 q3.5 7.4 12.5 9.6 M61.8 7.2 q-3 7.4 -12 9.6"/><path d="M65.8 16.8 v-12.8 h14.3 v12.3 l-1.3 0.6 M67.8 7 l2.8 6.5 M70.6 7 l-2.8 6.5 M73.6 7 l2.8 6.5 M76.4 7 l-2.8 6.5"/></g></svg>
<div class="a" style="left:1065px;top:1339px;width:2748px;height:680px;border-radius:14px 14px 0 0;background:#161b22"></div>
<svg style="left:1083px;top:1372px" width="21" height="15" viewBox="0 0 21 15"><rect x="0" y="1" width="20.7" height="2" fill="#d5dae0"/><rect x="0" y="6.6" width="13.9" height="2" fill="#d5dae0"/><rect x="0" y="12.2" width="6.9" height="2" fill="#d5dae0"/></svg>
<div class="t" style="left:1112px;top:1365px;font-size:27px;letter-spacing:0.7px;font-weight:400">Leaderboard</div>
<div class="a" style="left:1288px;top:1354px;width:166px;height:51px;border-radius:25.5px;background:#1c4a8d"></div>
<div class="t" style="left:1305.5px;top:1364.5px;font-size:22px;color:#a3abb4;letter-spacing:0.2px;font-weight:400">Memory Size</div>
<div class="t" style="left:1486.5px;top:1364.5px;font-size:22px;letter-spacing:0.3px;font-weight:400">Content Length</div>
<svg style="left:1696px;top:1368px" width="22" height="22" viewBox="0 0 22 22"><path d="M17.4 6.6 A8.1 8.1 0 1 0 18.3 14.6" fill="none" stroke="#f85149" stroke-width="2.6"/><path d="M19.9 1.2 V9.8 H11.4Z" fill="#f85149"/></svg>
<div class="t" style="left:1090px;top:1420.4px;font-size:21px;letter-spacing:0.4px;font-weight:700">#</div>
<div class="t" style="left:1481.6px;top:1420.4px;font-size:21px;letter-spacing:0.4px;font-weight:700">Type</div>
<div class="t" style="left:1947px;top:1420.4px;font-size:21px;letter-spacing:0.4px;font-weight:700">Key</div>
<div class="t" style="left:2413.4px;top:1420.4px;font-size:21px;letter-spacing:0.4px;font-weight:700">TTL</div>
<div class="t" style="left:2878px;top:1420.4px;font-size:21px;letter-spacing:0.4px;font-weight:700">Size</div>
<div class="t" style="left:3345px;top:1420.4px;font-size:21px;letter-spacing:0.4px;font-weight:700">Length</div>
<div class="a" style="left:1080px;top:1405px;width:2718px;height:614px;overflow:hidden">
<div class="a" style="left:0;top:59.9px;width:2718px;height:63px;background:#0d1117"></div>
<div class="a" style="left:0;top:185.9px;width:2718px;height:63px;background:#0d1117"></div>
<div class="a" style="left:0;top:311.9px;width:2718px;height:63px;background:#0d1117"></div>
<div class="a" style="left:0;top:437.9px;width:2718px;height:63px;background:#0d1117"></div>
<div class="a" style="left:0;top:563.9px;width:2718px;height:63px;background:#0d1117"></div>
</div>
<div class="t" style="left:1091px;top:1481.9px;font-size:21px;letter-spacing:0.4px;font-weight:400">1</div>
<div class="a" style="left:1482px;top:1479.8px;width:83.5px;height:33px;border-radius:6px;background:#6c7620"></div>
<div class="t" style="left:1488px;top:1481.4px;font-size:21px;letter-spacing:0.5px;font-weight:400">Stream</div>
<div class="t" style="left:1948px;top:1481.9px;font-size:21px;letter-spacing:0.45px;font-weight:400">stream:key:8</div>
<div class="t" style="left:2414.5px;top:1481.9px;font-size:21px;letter-spacing:0.4px;font-weight:400">-1</div>
<div class="t" style="left:2879px;top:1481.9px;font-size:21px;letter-spacing:1.4px;font-weight:400">4736</div>
<div class="t" style="left:3346px;top:1481.9px;font-size:21px;letter-spacing:0px;font-weight:400">1</div>
<div class="t" style="left:1091px;top:1544.9px;font-size:21px;letter-spacing:0.4px;font-weight:400">2</div>
<div class="a" style="left:1482px;top:1542.8px;width:83.5px;height:33px;border-radius:6px;background:#6c7620"></div>
<div class="t" style="left:1488px;top:1544.4px;font-size:21px;letter-spacing:0.5px;font-weight:400">Stream</div>
<div class="t" style="left:1948px;top:1544.9px;font-size:21px;letter-spacing:0.45px;font-weight:400">stream:key:187</div>
<div class="t" style="left:2414.5px;top:1544.9px;font-size:21px;letter-spacing:0.4px;font-weight:400">-1</div>
<div class="t" style="left:2879px;top:1544.9px;font-size:21px;letter-spacing:1.4px;font-weight:400">4736</div>
<div class="t" style="left:3346px;top:1544.9px;font-size:21px;letter-spacing:0px;font-weight:400">1</div>
<div class="t" style="left:1091px;top:1607.9px;font-size:21px;letter-spacing:0.4px;font-weight:400">3</div>
<div class="a" style="left:1482px;top:1605.8px;width:83.5px;height:33px;border-radius:6px;background:#6c7620"></div>
<div class="t" style="left:1488px;top:1607.4px;font-size:21px;letter-spacing:0.5px;font-weight:400">Stream</div>
<div class="t" style="left:1948px;top:1607.9px;font-size:21px;letter-spacing:0.45px;font-weight:400">stream:key:25</div>
<div class="t" style="left:2414.5px;top:1607.9px;font-size:21px;letter-spacing:0.4px;font-weight:400">-1</div>
<div class="t" style="left:2879px;top:1607.9px;font-size:21px;letter-spacing:1.4px;font-weight:400">4736</div>
<div class="t" style="left:3346px;top:1607.9px;font-size:21px;letter-spacing:0px;font-weight:400">1</div>
<div class="t" style="left:1091px;top:1670.9px;font-size:21px;letter-spacing:0.4px;font-weight:400">4</div>
<div class="a" style="left:1482px;top:1668.8px;width:83.5px;height:33px;border-radius:6px;background:#6c7620"></div>
<div class="t" style="left:1488px;top:1670.4px;font-size:21px;letter-spacing:0.5px;font-weight:400">Stream</div>
<div class="t" style="left:1948px;top:1670.9px;font-size:21px;letter-spacing:0.45px;font-weight:400">stream:key:265</div>
<div class="t" style="left:2414.5px;top:1670.9px;font-size:21px;letter-spacing:0.4px;font-weight:400">-1</div>
<div class="t" style="left:2879px;top:1670.9px;font-size:21px;letter-spacing:1.4px;font-weight:400">4736</div>
<div class="t" style="left:3346px;top:1670.9px;font-size:21px;letter-spacing:0px;font-weight:400">1</div>
<div class="t" style="left:1091px;top:1733.9px;font-size:21px;letter-spacing:0.4px;font-weight:400">5</div>
<div class="a" style="left:1482px;top:1731.8px;width:83.5px;height:33px;border-radius:6px;background:#6c7620"></div>
<div class="t" style="left:1488px;top:1733.4px;font-size:21px;letter-spacing:0.5px;font-weight:400">Stream</div>
<div class="t" style="left:1948px;top:1733.9px;font-size:21px;letter-spacing:0.45px;font-weight:400">stream:key:211</div>
<div class="t" style="left:2414.5px;top:1733.9px;font-size:21px;letter-spacing:0.4px;font-weight:400">-1</div>
<div class="t" style="left:2879px;top:1733.9px;font-size:21px;letter-spacing:1.4px;font-weight:400">4736</div>
<div class="t" style="left:3346px;top:1733.9px;font-size:21px;letter-spacing:0px;font-weight:400">1</div>
<div class="t" style="left:1091px;top:1796.9px;font-size:21px;letter-spacing:0.4px;font-weight:400">6</div>
<div class="a" style="left:1482px;top:1794.8px;width:83.5px;height:33px;border-radius:6px;background:#6c7620"></div>
<div class="t" style="left:1488px;top:1796.4px;font-size:21px;letter-spacing:0.5px;font-weight:400">Stream</div>
<div class="t" style="left:1948px;top:1796.9px;font-size:21px;letter-spacing:0.45px;font-weight:400">stream:key:220</div>
<div class="t" style="left:2414.5px;top:1796.9px;font-size:21px;letter-spacing:0.4px;font-weight:400">-1</div>
<div class="t" style="left:2879px;top:1796.9px;font-size:21px;letter-spacing:1.4px;font-weight:400">4736</div>
<div class="t" style="left:3346px;top:1796.9px;font-size:21px;letter-spacing:0px;font-weight:400">1</div>
<div class="t" style="left:1091px;top:1859.9px;font-size:21px;letter-spacing:0.4px;font-weight:400">7</div>
<div class="a" style="left:1482px;top:1857.8px;width:83.5px;height:33px;border-radius:6px;background:#6c7620"></div>
<div class="t" style="left:1488px;top:1859.4px;font-size:21px;letter-spacing:0.5px;font-weight:400">Stream</div>
<div class="t" style="left:1948px;top:1859.9px;font-size:21px;letter-spacing:0.45px;font-weight:400">stream:key:266</div>
<div class="t" style="left:2414.5px;top:1859.9px;font-size:21px;letter-spacing:0.4px;font-weight:400">-1</div>
<div class="t" style="left:2879px;top:1859.9px;font-size:21px;letter-spacing:1.4px;font-weight:400">4736</div>
<div class="t" style="left:3346px;top:1859.9px;font-size:21px;letter-spacing:0px;font-weight:400">1</div>
<div class="t" style="left:1091px;top:1922.9px;font-size:21px;letter-spacing:0.4px;font-weight:400">8</div>
<div class="a" style="left:1482px;top:1920.8px;width:83.5px;height:33px;border-radius:6px;background:#6c7620"></div>
<div class="t" style="left:1488px;top:1922.4px;font-size:21px;letter-spacing:0.5px;font-weight:400">Stream</div>
<div class="t" style="left:1948px;top:1922.9px;font-size:21px;letter-spacing:0.45px;font-weight:400">stream:key:190</div>
<div class="t" style="left:2414.5px;top:1922.9px;font-size:21px;letter-spacing:0.4px;font-weight:400">-1</div>
<div class="t" style="left:2879px;top:1922.9px;font-size:21px;letter-spacing:1.4px;font-weight:400">4736</div>
<div class="t" style="left:3346px;top:1922.9px;font-size:21px;letter-spacing:0px;font-weight:400">1</div>
<div class="t" style="left:1091px;top:1985.9px;font-size:21px;letter-spacing:0.4px;font-weight:400">9</div>
<div class="a" style="left:1482px;top:1983.8px;width:83.5px;height:33px;border-radius:6px;background:#6c7620"></div>
<div class="t" style="left:1488px;top:1985.4px;font-size:21px;letter-spacing:0.5px;font-weight:400">Stream</div>
<div class="t" style="left:1948px;top:1985.9px;font-size:21px;letter-spacing:0.45px;font-weight:400">stream:key:296</div>
<div class="t" style="left:2414.5px;top:1985.9px;font-size:21px;letter-spacing:0.4px;font-weight:400">-1</div>
<div class="t" style="left:2879px;top:1985.9px;font-size:21px;letter-spacing:1.4px;font-weight:400">4736</div>
<div class="t" style="left:3346px;top:1985.9px;font-size:21px;letter-spacing:0px;font-weight:400">1</div>
<div class="a" style="left:1050px;top:2034px;width:2790px;height:54px;background:#0d1117"></div>
<div class="a" style="left:1050px;top:2034px;width:2790px;height:3px;background:#30363d"></div>
<div class="a" style="left:1050px;top:2034px;width:166px;height:3px;background:#2f81f7"></div>
<svg style="left:1071px;top:2048px" width="27" height="27" viewBox="0 0 27 27"><circle cx="13.3" cy="13.3" r="11.4" fill="none" stroke="#d5dae0" stroke-width="2.2"/><rect x="12.2" y="11" width="2.3" height="8.3" rx="1.1" fill="#d5dae0"/><circle cx="13.35" cy="7.6" r="1.35" fill="#d5dae0"/></svg>
<div class="t" style="left:1103.5px;top:2045.6999999999998px;font-size:22px;letter-spacing:0.2px;font-weight:400">Report</div>
<svg style="left:1185px;top:2054px" width="13" height="13" viewBox="0 0 13 13"><path d="M1 1 L12 12 M12 1 L1 12" stroke="#d5dae0" stroke-width="2"/></svg>
<div id="right"></div>
</body></html>
